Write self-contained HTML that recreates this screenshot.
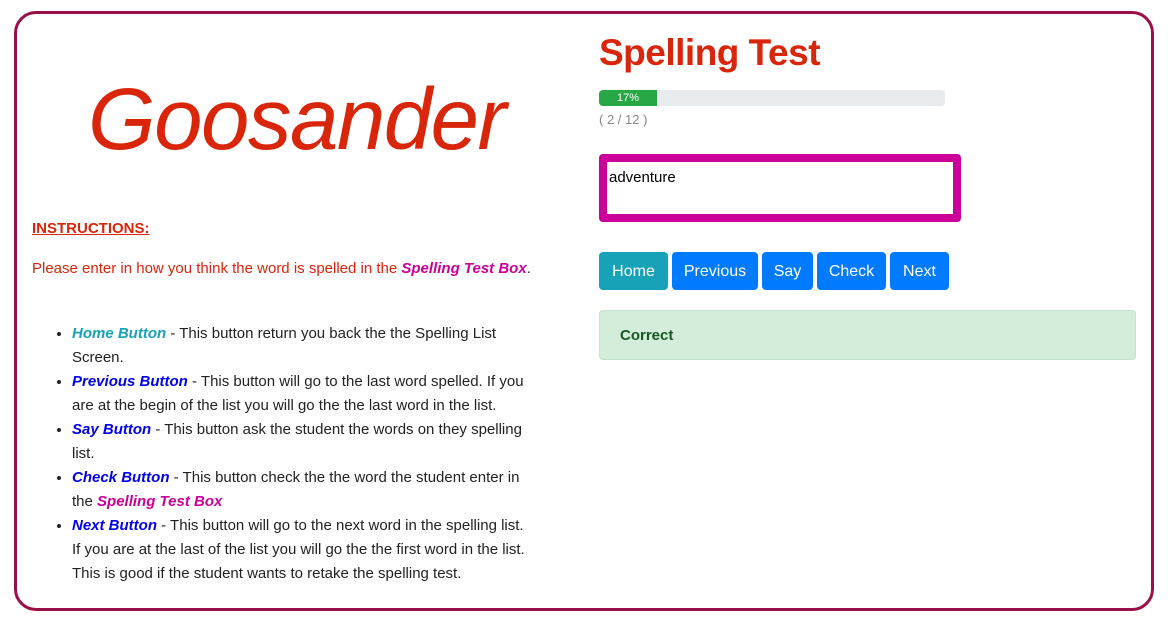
<!DOCTYPE html>
<html><head><meta charset="utf-8"><style>
body{margin:0;width:1171px;height:635px;background:#fff;font-family:"Liberation Sans",sans-serif;position:relative;overflow:hidden}
.frame{position:absolute;left:14px;top:11px;width:1134px;height:594px;border:3px solid #9b1048;border-radius:22px}
.a{position:absolute;white-space:nowrap}
.logo{left:88px;top:70px;font-size:87px;font-style:italic;color:#d9260a;font-weight:normal;letter-spacing:-1.5px}
.ins{left:32px;top:220px;font-size:15px;font-weight:bold;color:#d9260a;text-decoration:underline}
.p{left:32px;top:260px;font-size:15px;color:#d9260a}
.mag{color:#cc0099;font-weight:bold;font-style:italic}
ul{position:absolute;left:32px;top:322px;margin:0;padding-left:40px;font-size:15px;line-height:24px;color:#222;white-space:nowrap}
li b{font-style:italic}
.t{color:#17a2b8}.bl{color:#0000ee}
h1{position:absolute;left:599px;top:32px;margin:0;font-size:37px;color:#d9260a;font-weight:bold;letter-spacing:-0.5px}
.bar{left:599px;top:90px;width:346px;height:16px;background:#e9ecef;border-radius:4px;overflow:hidden}
.bar div{width:58px;height:16px;background:#28a745;color:#fff;font-size:11px;text-align:center;line-height:16px}
.cnt{left:599px;top:112px;font-size:13px;color:#888}
.ta{left:599px;top:154px;width:346px;height:52px;border:8px solid #cc0099;border-radius:4px;background:#fff;font-size:15px;padding:0}
.ta span{position:absolute;left:2px;top:7px;color:#000}
.btn{position:absolute;top:252px;height:38px;line-height:40px;color:#fff;background:#007bff;border-radius:4px;font-size:16px;text-align:center}
.alert{left:599px;top:310px;width:535px;height:48px;background:#d4edda;border:1px solid #c3e6cb;border-radius:4px;color:#155724;font-weight:bold;font-size:15px;line-height:50px;text-indent:20px}
</style></head><body>
<div class="frame"></div>
<div class="a logo">Goosander</div>
<div class="a ins">INSTRUCTIONS:</div>
<div class="a p">Please enter in how you think the word is spelled in the <span class="mag">Spelling Test Box</span><span style="color:#333">.</span></div>
<ul>
<li><b class="t">Home Button</b> - This button return you back the the Spelling List<br>Screen.</li>
<li><b class="bl">Previous Button</b> - This button will go to the last word spelled. If you<br>are at the begin of the list you will go the the last word in the list.</li>
<li><b class="bl">Say Button</b> - This button ask the student the words on they spelling<br>list.</li>
<li><b class="bl">Check Button</b> - This button check the the word the student enter in<br>the <span class="mag">Spelling Test Box</span></li>
<li><b class="bl">Next Button</b> - This button will go to the next word in the spelling list.<br>If you are at the last of the list you will go the the first word in the list.<br>This is good if the student wants to retake the spelling test.</li>
</ul>
<h1>Spelling Test</h1>
<div class="a bar"><div>17%</div></div>
<div class="a cnt">( 2 / 12 )</div>
<div class="a ta"><span>adventure</span></div>
<div class="btn" style="left:599px;width:69px;background:#17a2b8">Home</div>
<div class="btn" style="left:672px;width:86px">Previous</div>
<div class="btn" style="left:762px;width:51px">Say</div>
<div class="btn" style="left:817px;width:69px">Check</div>
<div class="btn" style="left:890px;width:59px">Next</div>
<div class="a alert">Correct</div>
</body></html>
